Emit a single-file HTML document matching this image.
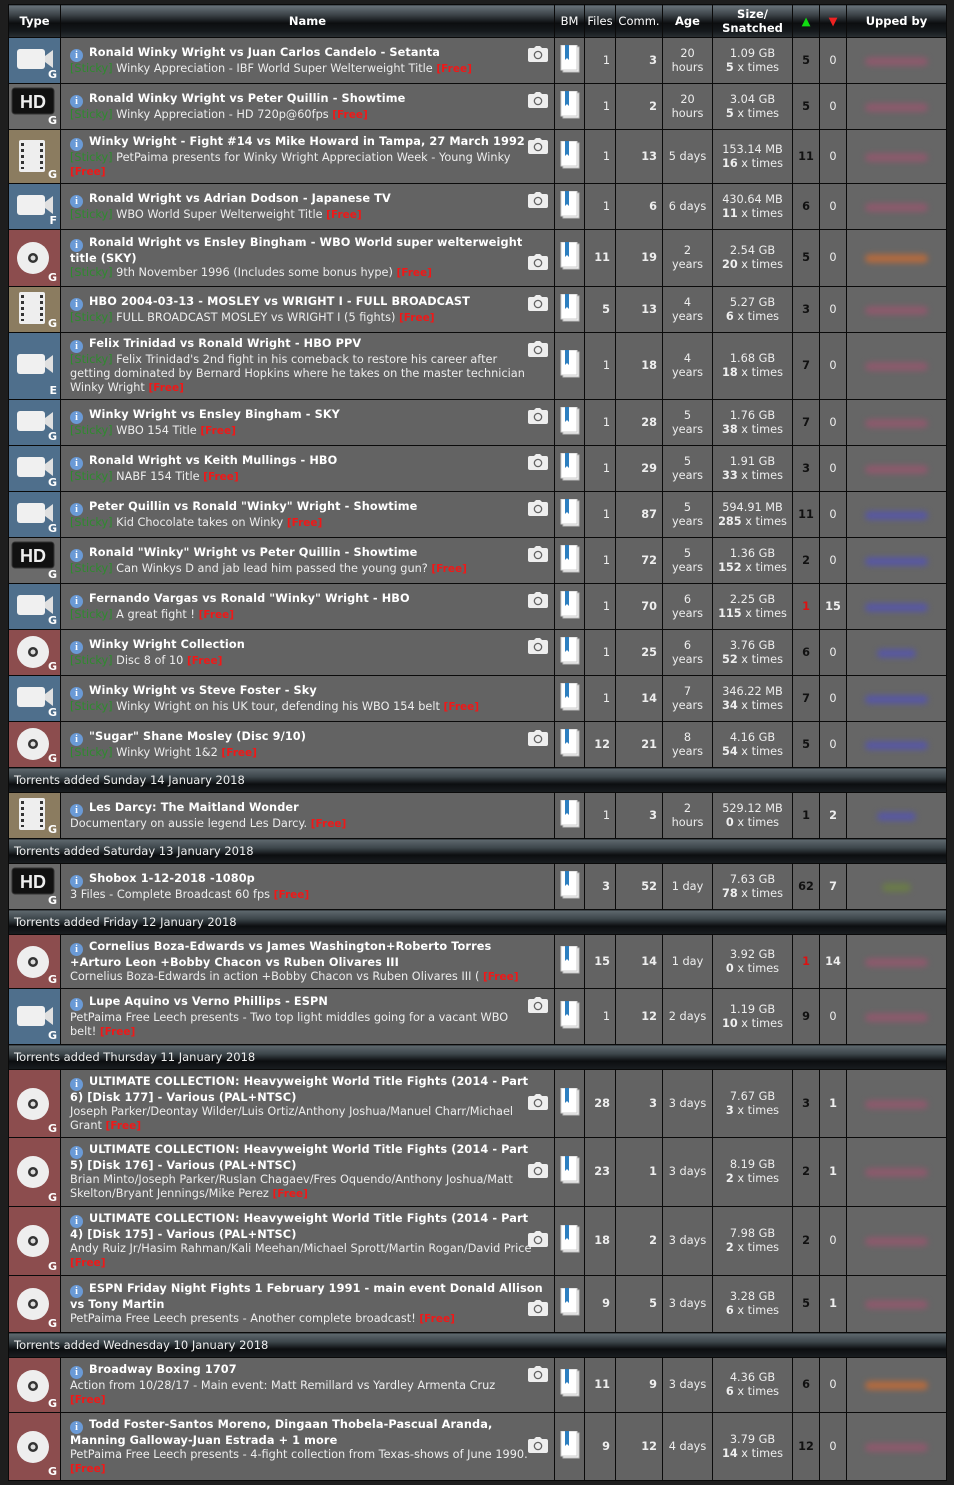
<!DOCTYPE html>
<html><head><meta charset="utf-8">
<style>
body{margin:0;background:#1e1e1e;width:954px;height:1485px;overflow:hidden;font-family:"DejaVu Sans","Liberation Sans",sans-serif;}
table{position:absolute;left:8px;top:4px;border-collapse:collapse;table-layout:fixed;width:938px;}
td,th{border:1px solid #0a0a0a;padding:0;color:#eee;font-size:11.3px;line-height:14px;background:#636363;}
th{height:32px;background:linear-gradient(#69737a 0%,#3b4247 30%,#0c0e10 55%,#15191c 80%,#2a3034 100%);font-weight:bold;font-size:11.5px;color:#fff;}
th.nb{font-weight:normal;}
td.sec{height:24px;background:linear-gradient(#5f696f 0%,#3d464b 35%,#0c0e10 65%,#1a1e21 100%);padding-left:5px;font-size:11.5px;color:#eee;}
td.t{position:relative;}
.ic{position:absolute;left:0;top:0;right:0;bottom:0;}
.cam{background:#4f6f8c}.hd{background:#6a6a6a}.film{background:#8b7c60}.disc{background:#8c4d4e}
.g{position:absolute;right:3px;bottom:1px;font-weight:bold;font-size:11px;color:#fff;}
td.n{position:relative;padding:2px 26px 2px 9px;vertical-align:middle;}
td.n b{color:#fff;font-size:11.3px;letter-spacing:.1px}
.i{display:inline-block;width:13px;height:13px;border-radius:50%;background:#6a9ad6;color:#fff;font-size:10px;line-height:13px;text-align:center;font-weight:bold;margin-right:6px;vertical-align:-2px;font-family:"Liberation Serif",serif;}
.s{color:#2e8b2e}
td.n .f{color:#f01818;font-size:10.5px;font-weight:bold}
.ca{position:absolute;right:6px;top:8px;width:20px;height:16px;}
td.bm{text-align:center}
td.r{text-align:right;padding-right:5px}
td.c{text-align:center}
.bo{font-weight:bold}
td.se{font-weight:bold;color:#111;text-align:center}
td.u{position:relative;background:#666;}
td.u i{position:absolute;left:18px;right:18px;top:50%;height:9px;margin-top:-4px;border-radius:5px;filter:blur(3px);}
.pk{background:#8b5a6c}.bl{background:#5858a0}.or{background:#b06a40}.gr{background:#6a7a4a}
</style></head><body>
<svg width="0" height="0" style="position:absolute">
<defs>
<symbol id="camr" viewBox="0 0 20 16"><path d="M6 2 L8 0 H12 L14 2 H18 Q20 2 20 4 V14 Q20 16 18 16 H2 Q0 16 0 14 V4 Q0 2 2 2 Z" fill="#eee"/><circle cx="10" cy="9" r="4.3" fill="#636363"/><circle cx="10" cy="9" r="3" fill="#eee"/></symbol>
<symbol id="book" viewBox="0 0 20 28"><rect x="3" y="2" width="16" height="25" fill="#f4f4f4" stroke="#bbb"/><rect x="1" y="0" width="16" height="25" fill="#fff" stroke="#ccc"/><path d="M5 0 V15 L7 13 L9 15 V0Z" fill="#2d7fc0"/></symbol>
<symbol id="cv" viewBox="0 0 52 44"><rect x="8" y="11" width="28" height="20" rx="3" fill="#f0f0f0"/><path d="M36 18 L44 12 V30 L36 24Z" fill="#e0e0e0"/></symbol>
<symbol id="hdv" viewBox="0 0 52 44"><rect x="3" y="4" width="42" height="26" rx="3" fill="#111" stroke="#333"/><text x="24" y="24" text-anchor="middle" fill="#eee" font-family="Liberation Sans" font-weight="bold" font-size="18">HD</text></symbol>
<symbol id="fv" viewBox="0 0 52 44"><rect x="10" y="5" width="26" height="32" rx="2" fill="#eee"/><g fill="#333"><rect x="12" y="8" width="3" height="3"/><rect x="12" y="14" width="3" height="3"/><rect x="12" y="20" width="3" height="3"/><rect x="12" y="26" width="3" height="3"/><rect x="12" y="32" width="3" height="2"/><rect x="31" y="8" width="3" height="3"/><rect x="31" y="14" width="3" height="3"/><rect x="31" y="20" width="3" height="3"/><rect x="31" y="26" width="3" height="3"/><rect x="31" y="32" width="3" height="2"/></g></symbol>
<symbol id="dv" viewBox="0 0 52 44"><circle cx="24" cy="22" r="16" fill="#eee"/><circle cx="24" cy="22" r="5" fill="#333"/><circle cx="24" cy="22" r="2.5" fill="#ddd"/></symbol>
</defs></svg>
<table>
<colgroup><col style="width:52px"><col style="width:494px"><col style="width:30px"><col style="width:31px"><col style="width:47px"><col style="width:50px"><col style="width:80px"><col style="width:27px"><col style="width:27px"><col style="width:100px"></colgroup>
<tr><th>Type</th><th>Name</th><th class="nb">BM</th><th class="nb">Files</th><th class="nb">Comm.</th><th>Age</th><th>Size/<br>Snatched</th><th><span style="color:#1d1">&#9650;</span></th><th><span style="color:#e22">&#9660;</span></th><th>Upped by</th></tr>

<tr style="height:46px"><td class="t"><div class="ic cam"><svg width="52" height="44"><use href="#cv"/></svg></div><span class="g">G</span></td><td class="n"><span class="i">i</span><b>Ronald Winky Wright vs Juan Carlos Candelo - Setanta</b><br><span class="s">[Sticky]</span> Winky Appreciation - IBF World Super Welterweight Title <span class="f">[Free]</span><svg class="ca"><use href="#camr"/></svg></td><td class="bm"><svg width="20" height="28"><use href="#book"/></svg></td><td class="r">1</td><td class="r bo">3</td><td class="c">20<br>hours</td><td class="c">1.09 GB<br><b>5</b> x times</td><td class="se">5</td><td class="c">0</td><td class="u"><i class="pk"></i></td></tr>

<tr style="height:46px"><td class="t"><div class="ic hd"><svg width="52" height="44"><use href="#hdv"/></svg></div><span class="g">G</span></td><td class="n"><span class="i">i</span><b>Ronald Winky Wright vs Peter Quillin - Showtime</b><br><span class="s">[Sticky]</span> Winky Appreciation - HD 720p@60fps <span class="f">[Free]</span><svg class="ca"><use href="#camr"/></svg></td><td class="bm"><svg width="20" height="28"><use href="#book"/></svg></td><td class="r">1</td><td class="r bo">2</td><td class="c">20<br>hours</td><td class="c">3.04 GB<br><b>5</b> x times</td><td class="se">5</td><td class="c">0</td><td class="u"><i class="pk"></i></td></tr>

<tr style="height:54px"><td class="t"><div class="ic film"><svg width="52" height="44" style="margin-top:5px"><use href="#fv"/></svg></div><span class="g">G</span></td><td class="n"><span class="i">i</span><b>Winky Wright - Fight #14 vs Mike Howard in Tampa, 27 March 1992</b><br><span class="s">[Sticky]</span> PetPaima presents for Winky Wright Appreciation Week - Young Winky<br><span class="f">[Free]</span><svg class="ca"><use href="#camr"/></svg></td><td class="bm"><svg width="20" height="28"><use href="#book"/></svg></td><td class="r">1</td><td class="r bo">13</td><td class="c">5 days</td><td class="c">153.14 MB<br><b>16</b> x times</td><td class="se">11</td><td class="c">0</td><td class="u"><i class="pk"></i></td></tr>

<tr style="height:46px"><td class="t"><div class="ic cam"><svg width="52" height="44"><use href="#cv"/></svg></div><span class="g">F</span></td><td class="n"><span class="i">i</span><b>Ronald Wright vs Adrian Dodson - Japanese TV</b><br><span class="s">[Sticky]</span> WBO World Super Welterweight Title <span class="f">[Free]</span><svg class="ca"><use href="#camr"/></svg></td><td class="bm"><svg width="20" height="28"><use href="#book"/></svg></td><td class="r">1</td><td class="r bo">6</td><td class="c">6 days</td><td class="c">430.64 MB<br><b>11</b> x times</td><td class="se">6</td><td class="c">0</td><td class="u"><i class="pk"></i></td></tr>

<tr style="height:57px"><td class="t"><div class="ic disc"><svg width="52" height="44" style="margin-top:6px"><use href="#dv"/></svg></div><span class="g">G</span></td><td class="n"><span class="i">i</span><b>Ronald Wright vs Ensley Bingham - WBO World super welterweight title (SKY)</b><br><span class="s">[Sticky]</span> 9th November 1996 (Includes some bonus hype) <span class="f">[Free]</span><svg class="ca" style="top:24px"><use href="#camr"/></svg></td><td class="bm"><svg width="20" height="28"><use href="#book"/></svg></td><td class="r bo">11</td><td class="r bo">19</td><td class="c">2<br>years</td><td class="c">2.54 GB<br><b>20</b> x times</td><td class="se">5</td><td class="c">0</td><td class="u"><i class="or"></i></td></tr>

<tr style="height:46px"><td class="t"><div class="ic film"><svg width="52" height="44"><use href="#fv"/></svg></div><span class="g">G</span></td><td class="n"><span class="i">i</span><b>HBO 2004-03-13 - MOSLEY vs WRIGHT I - FULL BROADCAST</b><br><span class="s">[Sticky]</span> FULL BROADCAST MOSLEY vs WRIGHT I (5 fights) <span class="f">[Free]</span><svg class="ca"><use href="#camr"/></svg></td><td class="bm"><svg width="20" height="28"><use href="#book"/></svg></td><td class="r bo">5</td><td class="r bo">13</td><td class="c">4<br>years</td><td class="c">5.27 GB<br><b>6</b> x times</td><td class="se">3</td><td class="c">0</td><td class="u"><i class="pk"></i></td></tr>

<tr style="height:67px"><td class="t"><div class="ic cam"><svg width="52" height="44" style="margin-top:10px"><use href="#cv"/></svg></div><span class="g">E</span></td><td class="n"><span class="i">i</span><b>Felix Trinidad vs Ronald Wright - HBO PPV</b><br><span class="s">[Sticky]</span> Felix Trinidad's 2nd fight in his comeback to restore his career after getting dominated by Bernard Hopkins where he takes on the master technician Winky Wright <span class="f">[Free]</span><svg class="ca"><use href="#camr"/></svg></td><td class="bm"><svg width="20" height="28"><use href="#book"/></svg></td><td class="r">1</td><td class="r bo">18</td><td class="c">4<br>years</td><td class="c">1.68 GB<br><b>18</b> x times</td><td class="se">7</td><td class="c">0</td><td class="u"><i class="pk"></i></td></tr>

<tr style="height:46px"><td class="t"><div class="ic cam"><svg width="52" height="44"><use href="#cv"/></svg></div><span class="g">G</span></td><td class="n"><span class="i">i</span><b>Winky Wright vs Ensley Bingham - SKY</b><br><span class="s">[Sticky]</span> WBO 154 Title <span class="f">[Free]</span><svg class="ca"><use href="#camr"/></svg></td><td class="bm"><svg width="20" height="28"><use href="#book"/></svg></td><td class="r">1</td><td class="r bo">28</td><td class="c">5<br>years</td><td class="c">1.76 GB<br><b>38</b> x times</td><td class="se">7</td><td class="c">0</td><td class="u"><i class="pk"></i></td></tr>

<tr style="height:46px"><td class="t"><div class="ic cam"><svg width="52" height="44"><use href="#cv"/></svg></div><span class="g">G</span></td><td class="n"><span class="i">i</span><b>Ronald Wright vs Keith Mullings - HBO</b><br><span class="s">[Sticky]</span> NABF 154 Title <span class="f">[Free]</span><svg class="ca"><use href="#camr"/></svg></td><td class="bm"><svg width="20" height="28"><use href="#book"/></svg></td><td class="r">1</td><td class="r bo">29</td><td class="c">5<br>years</td><td class="c">1.91 GB<br><b>33</b> x times</td><td class="se">3</td><td class="c">0</td><td class="u"><i class="pk"></i></td></tr>

<tr style="height:46px"><td class="t"><div class="ic cam"><svg width="52" height="44"><use href="#cv"/></svg></div><span class="g">G</span></td><td class="n"><span class="i">i</span><b>Peter Quillin vs Ronald "Winky" Wright - Showtime</b><br><span class="s">[Sticky]</span> Kid Chocolate takes on Winky <span class="f">[Free]</span><svg class="ca"><use href="#camr"/></svg></td><td class="bm"><svg width="20" height="28"><use href="#book"/></svg></td><td class="r">1</td><td class="r bo">87</td><td class="c">5<br>years</td><td class="c">594.91 MB<br><b>285</b> x times</td><td class="se">11</td><td class="c">0</td><td class="u"><i class="bl"></i></td></tr>

<tr style="height:46px"><td class="t"><div class="ic hd"><svg width="52" height="44"><use href="#hdv"/></svg></div><span class="g">G</span></td><td class="n"><span class="i">i</span><b>Ronald "Winky" Wright vs Peter Quillin - Showtime</b><br><span class="s">[Sticky]</span> Can Winkys D and jab lead him passed the young gun? <span class="f">[Free]</span><svg class="ca"><use href="#camr"/></svg></td><td class="bm"><svg width="20" height="28"><use href="#book"/></svg></td><td class="r">1</td><td class="r bo">72</td><td class="c">5<br>years</td><td class="c">1.36 GB<br><b>152</b> x times</td><td class="se">2</td><td class="c">0</td><td class="u"><i class="bl"></i></td></tr>

<tr style="height:46px"><td class="t"><div class="ic cam"><svg width="52" height="44"><use href="#cv"/></svg></div><span class="g">G</span></td><td class="n"><span class="i">i</span><b>Fernando Vargas vs Ronald "Winky" Wright - HBO</b><br><span class="s">[Sticky]</span> A great fight ! <span class="f">[Free]</span><svg class="ca"><use href="#camr"/></svg></td><td class="bm"><svg width="20" height="28"><use href="#book"/></svg></td><td class="r">1</td><td class="r bo">70</td><td class="c">6<br>years</td><td class="c">2.25 GB<br><b>115</b> x times</td><td class="se" style="color:#d11">1</td><td class="c bo">15</td><td class="u"><i class="bl"></i></td></tr>

<tr style="height:46px"><td class="t"><div class="ic disc"><svg width="52" height="44"><use href="#dv"/></svg></div><span class="g">G</span></td><td class="n"><span class="i">i</span><b>Winky Wright Collection</b><br><span class="s">[Sticky]</span> Disc 8 of 10 <span class="f">[Free]</span><svg class="ca"><use href="#camr"/></svg></td><td class="bm"><svg width="20" height="28"><use href="#book"/></svg></td><td class="r">1</td><td class="r bo">25</td><td class="c">6<br>years</td><td class="c">3.76 GB<br><b>52</b> x times</td><td class="se">6</td><td class="c">0</td><td class="u"><i class="bl" style="left:30px;right:30px"></i></td></tr>

<tr style="height:46px"><td class="t"><div class="ic cam"><svg width="52" height="44"><use href="#cv"/></svg></div><span class="g">G</span></td><td class="n"><span class="i">i</span><b>Winky Wright vs Steve Foster - Sky</b><br><span class="s">[Sticky]</span> Winky Wright on his UK tour, defending his WBO 154 belt <span class="f">[Free]</span></td><td class="bm"><svg width="20" height="28"><use href="#book"/></svg></td><td class="r">1</td><td class="r bo">14</td><td class="c">7<br>years</td><td class="c">346.22 MB<br><b>34</b> x times</td><td class="se">7</td><td class="c">0</td><td class="u"><i class="bl"></i></td></tr>

<tr style="height:46px"><td class="t"><div class="ic disc"><svg width="52" height="44"><use href="#dv"/></svg></div><span class="g">G</span></td><td class="n"><span class="i">i</span><b>"Sugar" Shane Mosley (Disc 9/10)</b><br><span class="s">[Sticky]</span> Winky Wright 1&amp;2 <span class="f">[Free]</span><svg class="ca"><use href="#camr"/></svg></td><td class="bm"><svg width="20" height="28"><use href="#book"/></svg></td><td class="r bo">12</td><td class="r bo">21</td><td class="c">8<br>years</td><td class="c">4.16 GB<br><b>54</b> x times</td><td class="se">5</td><td class="c">0</td><td class="u"><i class="bl"></i></td></tr>

<tr><td colspan="10" class="sec">Torrents added Sunday 14 January 2018</td></tr>

<tr style="height:46px"><td class="t"><div class="ic film"><svg width="52" height="44"><use href="#fv"/></svg></div><span class="g">G</span></td><td class="n"><span class="i">i</span><b>Les Darcy: The Maitland Wonder</b><br>Documentary on aussie legend Les Darcy. <span class="f">[Free]</span></td><td class="bm"><svg width="20" height="28"><use href="#book"/></svg></td><td class="r">1</td><td class="r bo">3</td><td class="c">2<br>hours</td><td class="c">529.12 MB<br><b>0</b> x times</td><td class="se">1</td><td class="c bo">2</td><td class="u"><i class="bl" style="left:30px;right:30px"></i></td></tr>

<tr><td colspan="10" class="sec">Torrents added Saturday 13 January 2018</td></tr>

<tr style="height:46px"><td class="t"><div class="ic hd"><svg width="52" height="44"><use href="#hdv"/></svg></div><span class="g">G</span></td><td class="n"><span class="i">i</span><b>Shobox 1-12-2018 -1080p</b><br>3 Files - Complete Broadcast 60 fps <span class="f">[Free]</span></td><td class="bm"><svg width="20" height="28"><use href="#book"/></svg></td><td class="r bo">3</td><td class="r bo">52</td><td class="c">1 day</td><td class="c">7.63 GB<br><b>78</b> x times</td><td class="se">62</td><td class="c bo">7</td><td class="u"><i class="gr" style="left:35px;right:35px"></i></td></tr>

<tr><td colspan="10" class="sec">Torrents added Friday 12 January 2018</td></tr>

<tr style="height:54px"><td class="t"><div class="ic disc"><svg width="52" height="44" style="margin-top:5px"><use href="#dv"/></svg></div><span class="g">G</span></td><td class="n" style="padding-right:8px"><span class="i">i</span><b>Cornelius Boza-Edwards vs James Washington+Roberto Torres +Arturo Leon +Bobby Chacon vs Ruben Olivares III</b><br>Cornelius Boza-Edwards in action +Bobby Chacon vs Ruben Olivares III ( <span class="f">[Free]</span></td><td class="bm"><svg width="20" height="28"><use href="#book"/></svg></td><td class="r bo">15</td><td class="r bo">14</td><td class="c">1 day</td><td class="c">3.92 GB<br><b>0</b> x times</td><td class="se" style="color:#d11">1</td><td class="c bo">14</td><td class="u"><i class="pk"></i></td></tr>

<tr style="height:56px"><td class="t"><div class="ic cam"><svg width="52" height="44" style="margin-top:6px"><use href="#cv"/></svg></div><span class="g">G</span></td><td class="n"><span class="i">i</span><b>Lupe Aquino vs Verno Phillips - ESPN</b><br>PetPaima Free Leech presents - Two top light middles going for a vacant WBO belt! <span class="f">[Free]</span><svg class="ca"><use href="#camr"/></svg></td><td class="bm"><svg width="20" height="28"><use href="#book"/></svg></td><td class="r">1</td><td class="r bo">12</td><td class="c">2 days</td><td class="c">1.19 GB<br><b>10</b> x times</td><td class="se">9</td><td class="c">0</td><td class="u"><i class="pk"></i></td></tr>

<tr><td colspan="10" class="sec">Torrents added Thursday 11 January 2018</td></tr>

<tr style="height:68px"><td class="t"><div class="ic disc"><svg width="52" height="44" style="margin-top:12px"><use href="#dv"/></svg></div><span class="g">G</span></td><td class="n" style="padding-right:14px"><span class="i">i</span><b>ULTIMATE COLLECTION: Heavyweight World Title Fights (2014 - Part 6) [Disk 177] - Various (PAL+NTSC)</b><br>Joseph Parker/Deontay Wilder/Luis Ortiz/Anthony Joshua/Manuel Charr/Michael Grant <span class="f">[Free]</span><svg class="ca" style="top:24px"><use href="#camr"/></svg></td><td class="bm"><svg width="20" height="28"><use href="#book"/></svg></td><td class="r bo">28</td><td class="r bo">3</td><td class="c">3 days</td><td class="c">7.67 GB<br><b>3</b> x times</td><td class="se">3</td><td class="c bo">1</td><td class="u"><i class="pk"></i></td></tr>

<tr style="height:69px"><td class="t"><div class="ic disc"><svg width="52" height="44" style="margin-top:12px"><use href="#dv"/></svg></div><span class="g">G</span></td><td class="n" style="padding-right:14px"><span class="i">i</span><b>ULTIMATE COLLECTION: Heavyweight World Title Fights (2014 - Part 5) [Disk 176] - Various (PAL+NTSC)</b><br>Brian Minto/Joseph Parker/Ruslan Chagaev/Fres Oquendo/Anthony Joshua/Matt Skelton/Bryant Jennings/Mike Perez <span class="f">[Free]</span><svg class="ca" style="top:24px"><use href="#camr"/></svg></td><td class="bm"><svg width="20" height="28"><use href="#book"/></svg></td><td class="r bo">23</td><td class="r bo">1</td><td class="c">3 days</td><td class="c">8.19 GB<br><b>2</b> x times</td><td class="se">2</td><td class="c bo">1</td><td class="u"><i class="pk"></i></td></tr>

<tr style="height:69px"><td class="t"><div class="ic disc"><svg width="52" height="44" style="margin-top:12px"><use href="#dv"/></svg></div><span class="g">G</span></td><td class="n" style="padding-right:14px"><span class="i">i</span><b>ULTIMATE COLLECTION: Heavyweight World Title Fights (2014 - Part 4) [Disk 175] - Various (PAL+NTSC)</b><br>Andy Ruiz Jr/Hasim Rahman/Kali Meehan/Michael Sprott/Martin Rogan/David Price <span class="f">[Free]</span><svg class="ca" style="top:24px"><use href="#camr"/></svg></td><td class="bm"><svg width="20" height="28"><use href="#book"/></svg></td><td class="r bo">18</td><td class="r bo">2</td><td class="c">3 days</td><td class="c">7.98 GB<br><b>2</b> x times</td><td class="se">2</td><td class="c">0</td><td class="u"><i class="pk"></i></td></tr>

<tr style="height:57px"><td class="t"><div class="ic disc"><svg width="52" height="44" style="margin-top:6px"><use href="#dv"/></svg></div><span class="g">G</span></td><td class="n" style="padding-right:4px"><span class="i">i</span><b>ESPN Friday Night Fights 1 February 1991 - main event Donald Allison vs Tony Martin</b><br>PetPaima Free Leech presents - Another complete broadcast! <span class="f">[Free]</span><svg class="ca" style="top:24px"><use href="#camr"/></svg></td><td class="bm"><svg width="20" height="28"><use href="#book"/></svg></td><td class="r bo">9</td><td class="r bo">5</td><td class="c">3 days</td><td class="c">3.28 GB<br><b>6</b> x times</td><td class="se">5</td><td class="c bo">1</td><td class="u"><i class="pk"></i></td></tr>

<tr><td colspan="10" class="sec">Torrents added Wednesday 10 January 2018</td></tr>

<tr style="height:55px"><td class="t"><div class="ic disc"><svg width="52" height="44" style="margin-top:6px"><use href="#dv"/></svg></div><span class="g">G</span></td><td class="n"><span class="i">i</span><b>Broadway Boxing 1707</b><br>Action from 10/28/17 - Main event: Matt Remillard vs Yardley Armenta Cruz <span class="f">[Free]</span><svg class="ca"><use href="#camr"/></svg></td><td class="bm"><svg width="20" height="28"><use href="#book"/></svg></td><td class="r bo">11</td><td class="r bo">9</td><td class="c">3 days</td><td class="c">4.36 GB<br><b>6</b> x times</td><td class="se">6</td><td class="c">0</td><td class="u"><i class="or"></i></td></tr>

<tr style="height:68px"><td class="t"><div class="ic disc"><svg width="52" height="44" style="margin-top:12px"><use href="#dv"/></svg></div><span class="g">G</span></td><td class="n"><span class="i">i</span><b>Todd Foster-Santos Moreno, Dingaan Thobela-Pascual Aranda, Manning Galloway-Juan Estrada + 1 more</b><br>PetPaima Free Leech presents - 4-fight collection from Texas-shows of June 1990. <span class="f">[Free]</span><svg class="ca" style="top:24px"><use href="#camr"/></svg></td><td class="bm"><svg width="20" height="28"><use href="#book"/></svg></td><td class="r bo">9</td><td class="r bo">12</td><td class="c">4 days</td><td class="c">3.79 GB<br><b>14</b> x times</td><td class="se">12</td><td class="c">0</td><td class="u"><i class="pk"></i></td></tr>
</table>
</body></html>
